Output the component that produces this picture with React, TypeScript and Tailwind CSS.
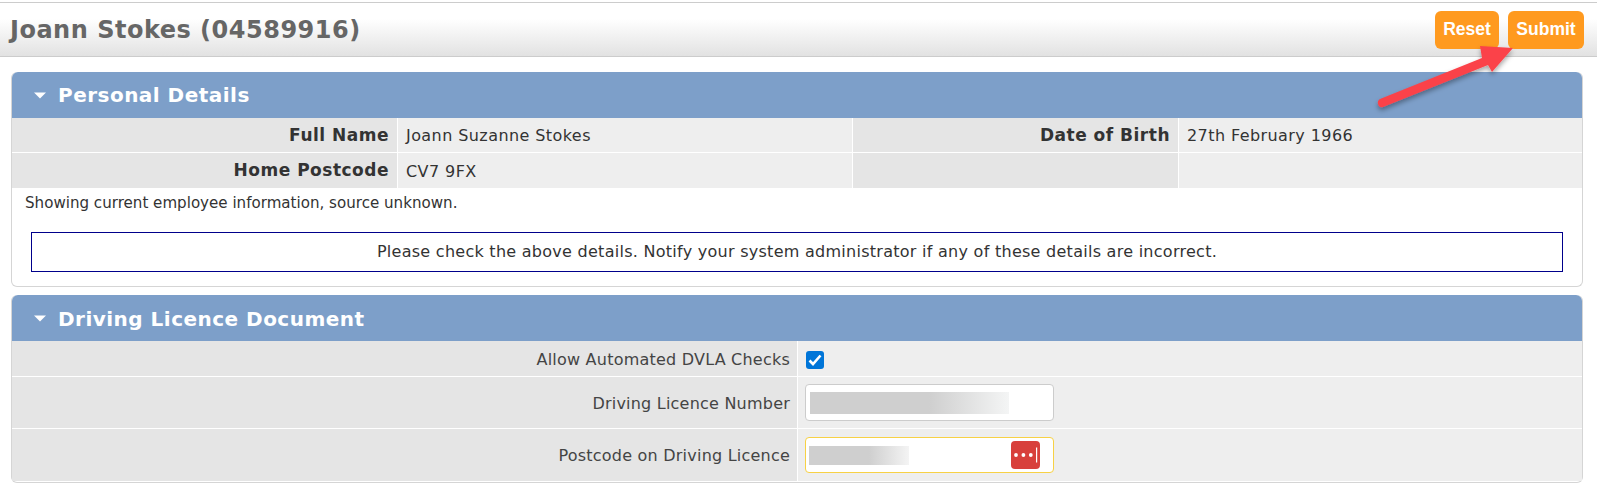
function PanelHeader({ title, textClass = "" }: { title: string; textClass?: string }) {
  return (
    <div className="flex h-[46px] items-center rounded-t-[6px] bg-[#7d9fc9] pl-[22px] text-white">
      <svg width="12" height="7" viewBox="0 0 12 7" className="mr-[12px]"><path d="M0 0.5h12L6 6.5z" fill="#fff" /></svg>
      <span className={`text-[20px] leading-none font-bold tracking-[0.48px] ${textClass}`}>{title}</span>
    </div>
  );
}

function Label({ children }: { children?: React.ReactNode }) {
  return <div className="flex items-center justify-end bg-[#e5e5e5] pt-[1px] pr-2 text-[17px] font-bold tracking-[0.5px] text-[#333]">{children}</div>;
}
function Value({ children }: { children?: React.ReactNode }) {
  return <div className="flex items-center bg-[#eeeeee] pt-[2px] pl-2 text-[16px] tracking-[0.42px] text-[#333]">{children}</div>;
}

function Blur({ w, h, to }: { w: string; h: string; to: string }) {
  return <div className={`${w} ${h} bg-gradient-to-r from-[#cfcfcf] from-60% ${to}`} />;
}

function FormLabel({ children }: { children: React.ReactNode }) {
  return <div className="flex items-center justify-end bg-[#e5e5e5] pt-[2px] pr-[7px] text-[16px] tracking-[0.22px] text-[#444]">{children}</div>;
}

export default function App() {
  return (
    <div className="relative h-[496px] w-[1597px] overflow-hidden bg-white font-['DejaVu_Sans',sans-serif]">
      <div className="mt-[2px] flex h-[55px] items-center justify-between border-y border-[#cccccc] bg-gradient-to-b from-white from-30% to-[#e2e2e2] pr-[13px] pl-[10px]">
        <h1 className="text-[24px] font-bold tracking-[0.5px] text-[#666]">Joann Stokes (04589916)</h1>
        <div className="flex gap-[9px] font-['Liberation_Sans',sans-serif] text-[17.5px] font-bold text-white">
          <button className="flex h-[38px] w-[64px] items-center justify-center rounded-[6px] bg-[#ff9a1f]">Reset</button>
          <button className="flex h-[38px] w-[76px] items-center justify-center rounded-[6px] bg-[#ff9a1f]">Submit</button>
        </div>
      </div>

      <div className="mt-[15px] mr-[14px] ml-[11px] h-[215px] rounded-[6px] border-x border-b border-[#d5d5d5]">
        <PanelHeader title="Personal Details" />
        <div className="grid grid-cols-[385px_454px_325px_1fr] grid-rows-[34px_35px] gap-x-px gap-y-px">
          <Label>Full Name</Label>
          <Value>Joann Suzanne Stokes</Value>
          <Label>Date of Birth</Label>
          <Value>27th February 1966</Value>
          <Label>Home Postcode</Label>
          <Value>CV7 9FX</Value>
          <Label />
          <Value />
        </div>
        <p className="mt-[6px] pl-[13px] text-[15.1px] leading-[18px] text-[#333]">Showing current employee information, source unknown.</p>
        <div className="mx-[19px] mt-[20px] flex h-[40px] items-center justify-center border border-[#00008b] text-[16px] tracking-[0.27px] text-[#333]">
          Please check the above details. Notify your system administrator if any of these details are incorrect.
        </div>
      </div>

      <div className="mt-[8px] mr-[14px] ml-[11px] h-[188px] rounded-[6px] border-x border-b border-[#d5d5d5]">
        <PanelHeader title="Driving Licence Document" textClass="pt-[2px]" />
        <div className="grid grid-cols-[785px_1fr] grid-rows-[35px_51px_52px] gap-px">
          <FormLabel>Allow Automated DVLA Checks</FormLabel>
          <div className="flex items-center bg-[#eeeeee] pt-[3px] pl-2">
            <span className="flex h-[18px] w-[18px] items-center justify-center rounded-[3px] bg-[#0075d8]">
              <svg width="14" height="12" viewBox="0 0 14 12"><path d="M1.5 6.5 5 10l7.5-8.5" fill="none" stroke="#fff" strokeWidth="2.6" /></svg>
            </span>
          </div>
          <FormLabel>Driving Licence Number</FormLabel>
          <div className="flex items-center bg-[#eeeeee] pl-[7px]">
            <div className="flex h-[37px] w-[249px] items-center rounded-[4px] border border-[#cccccc] bg-white pl-[4px]">
              <Blur w="w-[199px]" h="h-[22px]" to="to-[#f4f5f5]" />
            </div>
          </div>
          <FormLabel>Postcode on Driving Licence</FormLabel>
          <div className="flex items-center bg-[#eeeeee] pl-[7px]">
            <div className="flex h-[36px] w-[249px] items-center justify-between rounded-[4px] border border-[#f7d145] bg-white pr-[13px] pl-[3px]">
              <Blur w="w-[100px]" h="h-[19px]" to="to-[#f4f4f4]" />
              <span className="flex h-[28px] w-[29px] items-center justify-center rounded-[4px] bg-[#d8403b]">
                <svg width="24" height="16" viewBox="0 0 24 16">
                  <circle cx="2" cy="8" r="1.9" fill="#fff" /><circle cx="9.4" cy="8" r="1.9" fill="#fff" /><circle cx="16.8" cy="8" r="1.9" fill="#fff" />
                  <rect x="22" y="0.5" width="1.2" height="15" fill="#fff" />
                </svg>
              </span>
            </div>
          </div>
        </div>
      </div>

      <svg className="pointer-events-none absolute top-[40px] left-[1370px]" width="160" height="80" viewBox="0 0 160 80">
        <defs>
          <filter id="s" x="-20%" y="-20%" width="140%" height="150%"><feDropShadow dx="0" dy="3" stdDeviation="2.5" floodColor="#000" floodOpacity="0.35" /></filter>
        </defs>
        <path d="M110 6 L143 8 L122 32 L118 25 L13 67 Q9 68 8 64 Q7 61 10 59 L112 18 Z" fill="#fb4349" filter="url(#s)" />
      </svg>
    </div>
  );
}
